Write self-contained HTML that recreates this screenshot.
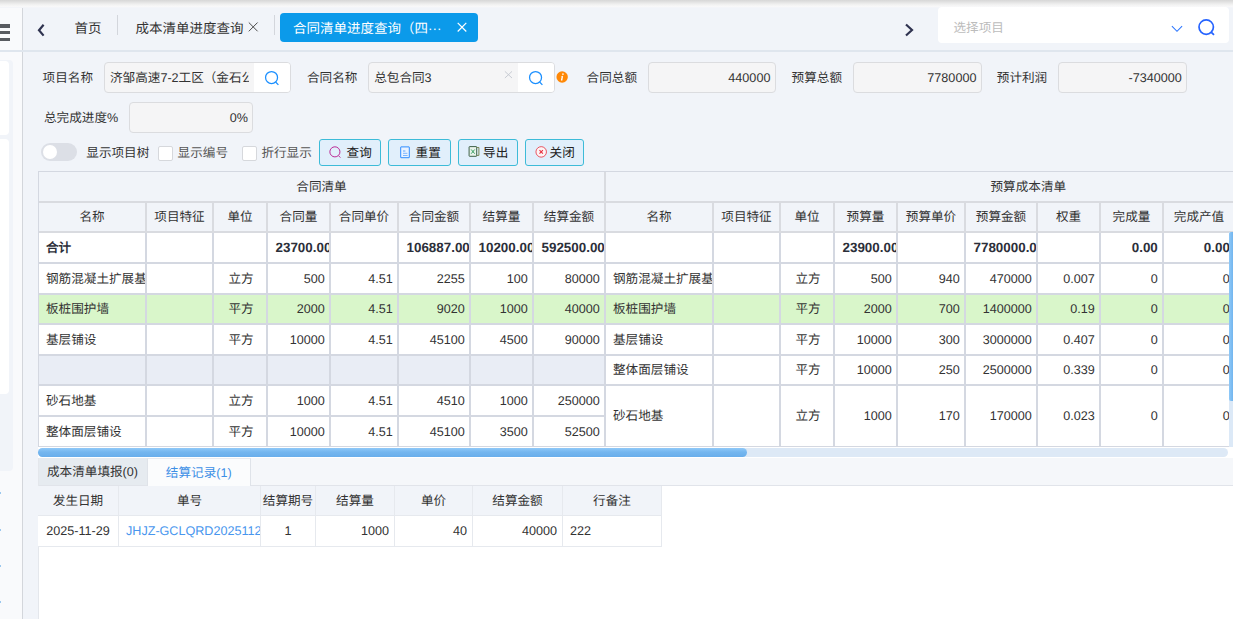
<!DOCTYPE html>
<html lang="zh-CN">
<head>
<meta charset="utf-8">
<title>合同清单进度查询</title>
<style>
*{box-sizing:border-box;margin:0;padding:0}
html,body{width:1233px;height:619px;overflow:hidden}
body{position:relative;background:#f1f4f9;font-family:"Liberation Sans",sans-serif;font-size:12.6px;color:#333;text-rendering:geometricPrecision;}
.abs{position:absolute}
.topshadow{left:0;top:0;width:1233px;height:8px;background:linear-gradient(to bottom,#d7d7d7 0,#e2e2e2 25%,#eeeeee 50%,#f8f8f8 78%,#f5f6f9 90%,#f1f4f9 100%)}
.side{left:0;top:8px;width:22px;height:611px;background:#f9fafc}
.sideline{left:22px;top:6px;width:1px;height:613px;background:#d3d6db}
.hline{left:0;top:50px;width:1233px;height:2px;background:#dfe6ee}
.bar{left:0;width:10px;height:3.4px;background:#585b60}
.sidebox{left:0;top:60px;width:12.5px;height:411px;background:#f1f4f9;border-radius:0 4px 4px 0}
.sp{left:0;width:9.3px;background:#fff;border-radius:0 4px 4px 0}
.tabtxt{font-size:13.5px;color:#333;top:19.6px;line-height:17px;white-space:nowrap}
.vsep{width:1px;top:15px;height:20px;background:#d3d6dc}
.lbl{line-height:16px;white-space:nowrap;color:#333}
.inp{height:30.5px;border:1px solid #dbdcdf;border-radius:4px;background:#f5f5f6;overflow:hidden;line-height:28.5px;white-space:nowrap;color:#333}
.inp .r{position:absolute;right:4.3px;top:1px}
.btn{top:139px;height:27px;border:1px solid #3dbbd8;border-radius:3px;background:#e1effb;line-height:26px;color:#222;white-space:nowrap}
.cb{width:15px;height:15px;border:1px solid #d6d8dc;border-radius:2px;background:#fff;top:146px}
table{border-collapse:separate;border-spacing:0;table-layout:fixed}
.grid td{line-height:16px;border:0 solid #d4d8e1;border-right-width:2px;border-bottom-width:2px;padding:0.8px 0 0 0;white-space:nowrap;overflow:hidden;background:#fff;color:#333}
.grid tr.h td{background:#f1f4f9;border-color:#d9dbe0;text-align:center}
.grid td.n{text-align:right;padding-right:4.2px}
.grid td.c{text-align:center;padding-left:2px}
.grid td.l{text-align:left;padding-left:7px}
.grid tr.sum td{font-weight:bold;color:#2c2f3a}
.grid tr.sum td.n{font-size:13.4px;padding-top:0}
.grid tr.sum td.o{text-align:left;padding-left:7.5px;padding-right:0}
.grid tr.g td{background:#d9f6ca;padding-top:0;padding-bottom:0.6px}
.grid td.e{background:#e9edf5}
.sub td{line-height:16px;border:0 solid #e6e9ee;border-right-width:1px;border-bottom-width:1px;padding:1.6px 0 0 0;white-space:nowrap;overflow:hidden;background:#fff;color:#333}
.sub tr.d td{padding-top:0}
.sub tr.h td{background:#f1f4f9;text-align:center}
.sub td.n{text-align:right;padding-right:5px}
.sub td.c{text-align:center}
.sub td.l{text-align:left;padding-left:7px}
</style>
</head>
<body>
<div class="abs side"></div>
<div class="abs sideline"></div>
<div class="abs topshadow"></div>
<div class="abs hline"></div>
<!-- hamburger -->
<div class="abs bar" style="top:24.3px"></div>
<div class="abs bar" style="top:31.1px"></div>
<div class="abs bar" style="top:37.9px"></div>
<div class="abs sidebox"></div>
<div class="abs sp" style="top:61px;height:74px"></div>
<div class="abs sp" style="top:138.8px;height:255.5px"></div>
<div class="abs" style="left:0;top:492px;width:1px;height:2px;background:#9cc8ee"></div>
<div class="abs" style="left:0;top:529px;width:1px;height:2px;background:#9cc8ee"></div>
<div class="abs" style="left:0;top:565px;width:1px;height:2px;background:#9cc8ee"></div>
<div class="abs" style="left:0;top:601px;width:1px;height:2px;background:#9cc8ee"></div>

<!-- top tabs -->
<svg class="abs" style="left:36px;top:22px" width="10" height="16" viewBox="0 0 10 16"><path d="M7.6 2.8 L3 8.2 L7.6 13.6" fill="none" stroke="#2f3350" stroke-width="2.2"/></svg>
<div class="abs tabtxt" style="left:74.5px">首页</div>
<div class="abs vsep" style="left:117px"></div>
<div class="abs tabtxt" style="left:135.5px">成本清单进度查询</div>
<svg class="abs" style="left:247px;top:21px" width="12" height="12" viewBox="0 0 12 12"><path d="M1.8 1.5 L10.6 10.3 M10.6 1.5 L1.8 10.3" stroke="#4a4a4a" stroke-width="1" fill="none"/></svg>
<div class="abs vsep" style="left:274px"></div>
<div class="abs" style="left:280px;top:13px;width:198px;height:29px;background:#0b9aea;border-radius:4px"></div>
<div class="abs tabtxt" style="left:293px;color:#fff">合同清单进度查询（四···</div>
<svg class="abs" style="left:455.5px;top:21px" width="12" height="12" viewBox="0 0 12 12"><path d="M1.7 1.9 L10.3 10.5 M10.3 1.9 L1.7 10.5" stroke="#fff" stroke-width="1.2" fill="none"/></svg>
<svg class="abs" style="left:903px;top:22px" width="12" height="16" viewBox="0 0 12 16"><path d="M3 2.5 L9 8 L3 13.5" fill="none" stroke="#2f3350" stroke-width="2.2"/></svg>
<!-- project select -->
<div class="abs" style="left:938px;top:7px;width:291px;height:36px;background:#fff;border-radius:4px"></div>
<div class="abs" style="left:953.5px;top:19.5px;line-height:16px;color:#bcbcbc;font-size:12.6px">选择项目</div>
<svg class="abs" style="left:1170px;top:24px" width="14" height="10" viewBox="0 0 14 10"><path d="M1.9 2.2 L7 7.3 L12.1 2.2" fill="none" stroke="#2b76ff" stroke-width="1.05"/></svg>
<svg class="abs" style="left:1197px;top:18px" width="20" height="20" viewBox="0 0 20 20"><circle cx="9.2" cy="9.1" r="7.2" fill="none" stroke="#2563ff" stroke-width="1.7"/><path d="M14.4 14.3 L17 16.9" stroke="#2563ff" stroke-width="1.7" fill="none"/></svg>

<!-- FORM -->

<!-- row1 -->
<div class="abs lbl" style="left:42.6px;top:69.5px">项目名称</div>
<div class="abs inp" style="left:104px;top:62px;width:187px"><span style="position:absolute;left:5px;top:1px;width:139.2px;overflow:hidden;display:block;height:28px">济邹高速7-2工区（金石公司</span><span style="position:absolute;left:149px;top:0;width:37px;height:29px;background:#fff"></span></div>
<svg class="abs" style="left:263px;top:69px" width="18" height="18" viewBox="0 0 18 18"><circle cx="8.55" cy="8.5" r="6" fill="none" stroke="#1a8fff" stroke-width="1.25"/><path d="M12.6 13 L15.4 15.8" stroke="#1a8fff" stroke-width="1.2" fill="none"/></svg>
<div class="abs lbl" style="left:307px;top:69.5px">合同名称</div>
<div class="abs inp" style="left:368px;top:62px;width:186.5px"><span style="position:absolute;left:5.2px;top:1px">总包合同3</span><span style="position:absolute;left:148.8px;top:0;width:37px;height:29px;background:#fff"></span></div>
<svg class="abs" style="left:504px;top:70px" width="9" height="9" viewBox="0 0 9 9"><path d="M0.9 1.4 L8 8 M8 1.4 L0.9 8" stroke="#c3c7cf" stroke-width="0.9" fill="none"/></svg>
<svg class="abs" style="left:527px;top:69px" width="18" height="18" viewBox="0 0 18 18"><circle cx="8.55" cy="8.5" r="6" fill="none" stroke="#1a8fff" stroke-width="1.25"/><path d="M12.6 13 L15.4 15.8" stroke="#1a8fff" stroke-width="1.2" fill="none"/></svg>
<svg class="abs" style="left:556px;top:71px" width="12" height="12" viewBox="0 0 12 12"><circle cx="6.15" cy="6.05" r="5.7" fill="#ff8806"/><circle cx="6.95" cy="3.15" r="0.8" fill="#fff"/><path d="M6.45 5.1 L5.55 9.4" stroke="#fff" stroke-width="1.35" fill="none"/><path d="M5.4 5.5 L6.6 5.1 M5.3 9.2 L6.4 8.9" stroke="#fff" stroke-width="0.6" fill="none"/></svg>
<div class="abs lbl" style="left:586.6px;top:69.5px">合同总额</div>
<div class="abs inp" style="left:648px;top:62px;width:127.7px"><span class="r">440000</span></div>
<div class="abs lbl" style="left:791.6px;top:69.5px">预算总额</div>
<div class="abs inp" style="left:853px;top:62px;width:128.7px"><span class="r">7780000</span></div>
<div class="abs lbl" style="left:996.8px;top:69.5px">预计利润</div>
<div class="abs inp" style="left:1058.3px;top:62px;width:128.7px"><span class="r">-7340000</span></div>
<!-- row2 -->
<div class="abs lbl" style="left:44px;top:109.5px">总完成进度%</div>
<div class="abs inp" style="left:129px;top:102px;width:124.2px"><span class="r">0%</span></div>
<!-- row3 -->
<div class="abs" style="left:41px;top:143px;width:36px;height:18px;border-radius:9px;background:#dcdfe6"></div>
<div class="abs" style="left:43px;top:145px;width:14px;height:14px;border-radius:7px;background:#fff"></div>
<div class="abs lbl" style="left:86.3px;top:144.8px">显示项目树</div>
<div class="abs cb" style="left:158px"></div>
<div class="abs lbl" style="left:177.6px;top:144.8px;color:#555">显示编号</div>
<div class="abs cb" style="left:242px"></div>
<div class="abs lbl" style="left:261.4px;top:144.8px;color:#555">折行显示</div>
<div class="abs btn" style="left:319px;width:62px"><span style="position:absolute;left:26.6px">查询</span></div>
<svg class="abs" style="left:328px;top:145px" width="15" height="15" viewBox="0 0 15 15"><circle cx="6.9" cy="6.85" r="5.05" fill="none" stroke="#bb2a96" stroke-width="1"/><path d="M10.5 10.7 L12.4 12.6" stroke="#bb2a96" stroke-width="1" fill="none"/></svg>
<div class="abs btn" style="left:388px;width:62.5px"><span style="position:absolute;left:26.6px">重置</span></div>
<svg class="abs" style="left:399px;top:146px" width="12" height="13" viewBox="0 0 12 13"><rect x="1.7" y="0.9" width="8.6" height="10.8" rx="0.3" fill="#eaf3ff" stroke="#2f8cff" stroke-width="1"/><path d="M4 5 H6.4" stroke="#4a9bff" stroke-width="0.9" fill="none"/><path d="M4 7.3 H8.4 M4 9.5 H8.6" stroke="#7ab5ff" stroke-width="1" fill="none"/></svg>
<div class="abs btn" style="left:458px;width:60px"><span style="position:absolute;left:24.1px">导出</span></div>
<svg class="abs" style="left:468px;top:145px" width="13" height="13" viewBox="0 0 13 13"><rect x="1.1" y="1.6" width="7.6" height="9.7" rx="0.5" fill="#e8f3ea" stroke="#36593f" stroke-width="0.95"/><path d="M8.8 2.5 H10.9 V10.4 H8.8" fill="none" stroke="#6f7f45" stroke-width="0.9"/><path d="M3.2 4.5 L6.7 8.7 M6.7 4.5 L3.2 8.7" stroke="#2f9a5c" stroke-width="0.95" fill="none"/></svg>
<div class="abs btn" style="left:525.3px;width:58.7px"><span style="position:absolute;left:23.3px">关闭</span></div>
<svg class="abs" style="left:535px;top:145px" width="13" height="13" viewBox="0 0 13 13"><circle cx="6.2" cy="6.9" r="5.25" fill="#fdf4f5" stroke="#e8434f" stroke-width="0.9"/><path d="M4.5 5.2 L7.9 8.6 M7.9 5.2 L4.5 8.6" stroke="#e6303e" stroke-width="1.1" fill="none"/></svg>

<!-- GRID -->
<div class="abs" style="left:38px;top:171px;width:1195px;height:276px;overflow:hidden">
<table class="grid" style="width:1198px;border-left:1px solid #d4d8e1;border-top:1px solid #d4d8e1"><colgroup><col style="width:108px"><col style="width:67px"><col style="width:54px"><col style="width:63px"><col style="width:68px"><col style="width:72px"><col style="width:63px"><col style="width:72px"><col style="width:108px"><col style="width:67px"><col style="width:54px"><col style="width:63px"><col style="width:68px"><col style="width:72px"><col style="width:63px"><col style="width:63px"><col style="width:72px"></colgroup>
<tr class="h" style="height:31px"><td colspan="8">合同清单</td><td colspan="9" style="text-align:left"><span style="position:absolute;left:952.5px;top:7.5px;line-height:16px">预算成本清单</span></td></tr>
<tr class="h" style="height:30px"><td class="">名称</td><td class="">项目特征</td><td class="">单位</td><td class="">合同量</td><td class="">合同单价</td><td class="">合同金额</td><td class="">结算量</td><td class="">结算金额</td><td class="">名称</td><td class="">项目特征</td><td class="">单位</td><td class="">预算量</td><td class="">预算单价</td><td class="">预算金额</td><td class="">权重</td><td class="">完成量</td><td class="">完成产值</td></tr>
<tr class="sum" style="height:31px"><td class="l">合计</td><td class=""></td><td class=""></td><td class="n o">23700.00</td><td class=""></td><td class="n o">106887.00</td><td class="n o">10200.00</td><td class="n o">592500.00</td><td class=""></td><td class=""></td><td class=""></td><td class="n o">23900.00</td><td class=""></td><td class="n o">7780000.00</td><td class=""></td><td class="n">0.00</td><td class="n">0.00</td></tr>
<tr class="" style="height:31px"><td class="l">钢筋混凝土扩展基础</td><td class=""></td><td class="c">立方</td><td class="n">500</td><td class="n">4.51</td><td class="n">2255</td><td class="n">100</td><td class="n">80000</td><td class="l">钢筋混凝土扩展基础</td><td class=""></td><td class="c">立方</td><td class="n">500</td><td class="n">940</td><td class="n">470000</td><td class="n">0.007</td><td class="n">0</td><td class="n">0</td></tr>
<tr class="g" style="height:30px"><td class="l">板桩围护墙</td><td class=""></td><td class="c">平方</td><td class="n">2000</td><td class="n">4.51</td><td class="n">9020</td><td class="n">1000</td><td class="n">40000</td><td class="l">板桩围护墙</td><td class=""></td><td class="c">平方</td><td class="n">2000</td><td class="n">700</td><td class="n">1400000</td><td class="n">0.19</td><td class="n">0</td><td class="n">0</td></tr>
<tr class="" style="height:31px"><td class="l">基层铺设</td><td class=""></td><td class="c">平方</td><td class="n">10000</td><td class="n">4.51</td><td class="n">45100</td><td class="n">4500</td><td class="n">90000</td><td class="l">基层铺设</td><td class=""></td><td class="c">平方</td><td class="n">10000</td><td class="n">300</td><td class="n">3000000</td><td class="n">0.407</td><td class="n">0</td><td class="n">0</td></tr>
<tr class="" style="height:30px"><td class="e"></td><td class="e"></td><td class="e"></td><td class="e"></td><td class="e"></td><td class="e"></td><td class="e"></td><td class="e"></td><td class="l">整体面层铺设</td><td class=""></td><td class="c">平方</td><td class="n">10000</td><td class="n">250</td><td class="n">2500000</td><td class="n">0.339</td><td class="n">0</td><td class="n">0</td></tr>
<tr class="" style="height:31px"><td class="l">砂石地基</td><td class=""></td><td class="c">立方</td><td class="n">1000</td><td class="n">4.51</td><td class="n">4510</td><td class="n">1000</td><td class="n">250000</td><td class="l" rowspan="2">砂石地基</td><td class="" rowspan="2"></td><td class="c" rowspan="2">立方</td><td class="n" rowspan="2">1000</td><td class="n" rowspan="2">170</td><td class="n" rowspan="2">170000</td><td class="n" rowspan="2">0.023</td><td class="n" rowspan="2">0</td><td class="n" rowspan="2">0</td></tr>
<tr class="" style="height:31px"><td class="l">整体面层铺设</td><td class=""></td><td class="c">平方</td><td class="n">10000</td><td class="n">4.51</td><td class="n">45100</td><td class="n">3500</td><td class="n">52500</td></tr>
</table></div>
<!-- scrollbars -->
<div class="abs" style="left:1228.5px;top:232px;width:5px;height:215px;background:#dce9f7"></div>
<div class="abs" style="left:1228.5px;top:232px;width:5px;height:169px;background:linear-gradient(to right,#8fc9f8 0,#6bb0ec 100%);border-radius:2px 0 0 2px"></div>
<div class="abs" style="left:38px;top:447px;width:1195px;height:10.5px;background:#fff"></div>
<div class="abs" style="left:38px;top:447.6px;width:1189.5px;height:9.2px;background:#dde9f6;border-radius:4.5px"></div>
<div class="abs" style="left:38px;top:447.6px;width:709px;height:9.2px;background:linear-gradient(to bottom,#90c9f8 0,#74b6ef 45%,#69aeeb 100%);border-radius:4.5px"></div>

<!-- BOTTOM -->

<div class="abs" style="left:38px;top:457.5px;width:1195px;height:161.5px;background:#fff"></div>
<div class="abs" style="left:38px;top:458px;width:1195px;height:27.5px;background:#f5f7fa;border-bottom:1px solid #e1e4ea"></div>
<div class="abs" style="left:38px;top:458px;width:109px;height:27px;background:#e6ebf0;text-align:center;line-height:29px;color:#333">成本清单填报(0)</div>
<div class="abs" style="left:147px;top:458px;width:103.5px;height:28px;background:#fbfcfd;border:1px solid #dfe3e9;border-bottom:0;border-top-color:#e8ebf0;text-align:center;line-height:28px;color:#3d8fe6">结算记录(1)</div>
<div class="abs" style="left:37.5px;top:458px;width:1px;height:161px;background:#e4e7ec"></div>
<table class="abs sub" style="left:38px;top:486px;width:624px"><colgroup><col style="width:81px"><col style="width:142px"><col style="width:55px"><col style="width:79px"><col style="width:78px"><col style="width:90px"><col style="width:99px"></colgroup>
<tr class="h" style="height:30px"><td>发生日期</td><td>单号</td><td>结算期号</td><td>结算量</td><td>单价</td><td>结算金额</td><td>行备注</td></tr>
<tr class="d" style="height:31px"><td class="c">2025-11-29</td><td class="l" style="color:#4896ee">JHJZ-GCLQRD202511290001</td><td class="c">1</td><td class="n">1000</td><td class="n">40</td><td class="n">40000</td><td class="l">222</td></tr>
</table>

</body>
</html>
